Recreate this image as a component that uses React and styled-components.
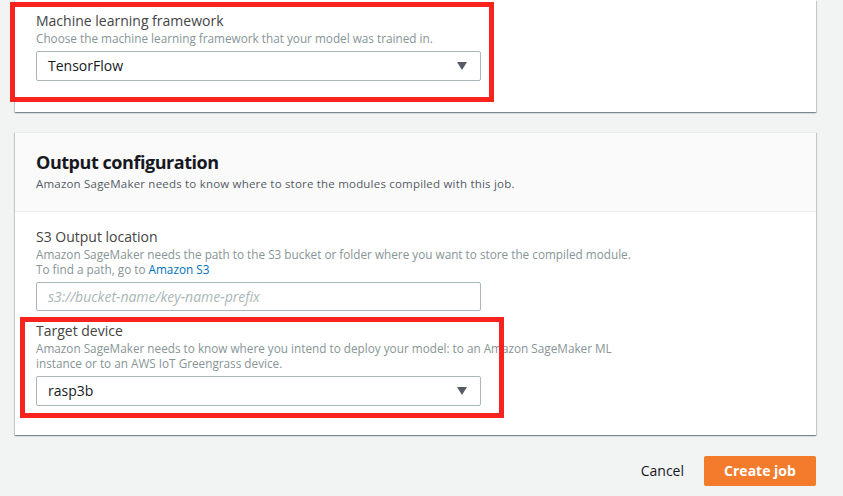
import React from "react";
import styled, { createGlobalStyle } from "styled-components";

const GlobalStyle = createGlobalStyle`
  html, body {
    margin: 0;
    padding: 0;
    background: #f2f3f3;
  }
  body {
    font-family: "Open Sans", "Noto Sans", sans-serif;
    color: #16191f;
  }
`;

const Page = styled.div`
  width: 801px;
  padding-left: 15px;
  display: flex;
  flex-direction: column;
`;

const Card = styled.section`
  background: #fff;
  box-shadow: 0 1px 1px 0 rgba(0, 28, 36, 0.3), 1px 1px 1px 0 rgba(0, 28, 36, 0.15),
    -1px 1px 1px 0 rgba(0, 28, 36, 0.15);
  border-top: ${(p) => (p.$open ? "none" : "1px solid #eaeded")};
  margin-top: ${(p) => p.$mt || 0}px;
`;

const CardHeader = styled.header`
  background: #fafafa;
  border-bottom: 1px solid #eaeded;
  padding: 17px 21px 19px;
`;

const Title = styled.h2`
  margin: 0;
  font-size: 18px;
  line-height: 24px;
  font-weight: 700;
  letter-spacing: -0.45px;
  color: #16191f;
`;

const Subtitle = styled.p`
  margin: 2px 0 0;
  font-size: 11.5px;
  line-height: 16px;
  color: #545b64;
  letter-spacing: 0.2px;
`;

const CardBody = styled.div`
  padding: ${(p) => p.$pad};
  display: flex;
  flex-direction: column;
  gap: 10px;
`;

const Field = styled.div`
  position: relative;
  display: flex;
  flex-direction: column;
`;

const Highlight = styled.div`
  position: absolute;
  top: ${(p) => p.$top}px;
  left: ${(p) => p.$left}px;
  width: ${(p) => p.$w}px;
  height: ${(p) => p.$h}px;
  border: 5px solid #f8231e;
  box-sizing: border-box;
  pointer-events: none;
`;

const Label = styled.div`
  font-size: 14px;
  line-height: 20px;
  color: #444;
`;

const Hint = styled.div`
  font-size: 11.75px;
  line-height: 15.5px;
  color: #879596;
`;

const Link = styled.a`
  color: #0073bb;
  text-decoration: none;
`;

const Select = styled.div`
  margin-top: 4px;
  width: 445px;
  height: 30px;
  box-sizing: border-box;
  border: 1px solid #aab7b8;
  border-radius: 2px;
  background: #fff;
  display: flex;
  align-items: center;
  justify-content: space-between;
  padding: 0 13px 0 11px;
  font-size: 14px;
  color: #16191f;
`;

const Caret = styled.span`
  width: 0;
  height: 0;
  border-left: 5.5px solid transparent;
  border-right: 5.5px solid transparent;
  border-top: 8px solid #545b64;
`;

const Input = styled.input`
  margin-top: 4px;
  width: 445px;
  height: 29px;
  box-sizing: border-box;
  border: 1px solid #aab7b8;
  border-radius: 2px;
  padding: 0 11px;
  font-family: inherit;
  font-size: 14px;
  outline: none;
  &::placeholder {
    color: #aab7b8;
    font-style: italic;
  }
`;

const Footer = styled.div`
  display: flex;
  justify-content: flex-end;
  align-items: center;
  gap: 20px;
  margin-top: 21px;
`;

const TextButton = styled.button`
  background: none;
  border: none;
  font-family: inherit;
  font-size: 14px;
  color: #16191f;
  padding: 0;
`;

const PrimaryButton = styled.button`
  width: 112px;
  height: 30px;
  background: #f47b2c;
  border: none;
  border-radius: 2px;
  color: #fff;
  font-family: inherit;
  font-size: 14px;
  font-weight: 700;
`;

export default function App() {
  return (
    <>
      <GlobalStyle />
      <Page>
        <Card $open>
          <CardBody $pad="11px 21px 31px">
            <Field>
              <Highlight $top={-9} $left={-26} $w={484} $h={100} />
              <Label>Machine learning framework</Label>
              <Hint>Choose the machine learning framework that your model was trained in.</Hint>
              <Select>
                TensorFlow
                <Caret />
              </Select>
            </Field>
          </CardBody>
        </Card>

        <Card $mt={20}>
          <CardHeader>
            <Title>Output configuration</Title>
            <Subtitle>Amazon SageMaker needs to know where to store the modules compiled with this job.</Subtitle>
          </CardHeader>
          <CardBody $pad="15px 21px 29px">
            <Field>
              <Label>S3 Output location</Label>
              <Hint>
                Amazon SageMaker needs the path to the S3 bucket or folder where you want to store the compiled module.
                <br />
                To find a path, go to <Link href="#">Amazon S3</Link>
              </Hint>
              <Input placeholder="s3://bucket-name/key-name-prefix" />
            </Field>
            <Field>
              <Highlight $top={-4} $left={-16} $w={484} $h={101} />
              <Label>Target device</Label>
              <Hint>
                Amazon SageMaker needs to know where you intend to deploy your model: to an Amazon SageMaker ML
                <br />
                instance or to an AWS IoT Greengrass device.
              </Hint>
              <Select>
                rasp3b
                <Caret />
              </Select>
            </Field>
          </CardBody>
        </Card>

        <Footer>
          <TextButton>Cancel</TextButton>
          <PrimaryButton>Create job</PrimaryButton>
        </Footer>
      </Page>
    </>
  );
}
